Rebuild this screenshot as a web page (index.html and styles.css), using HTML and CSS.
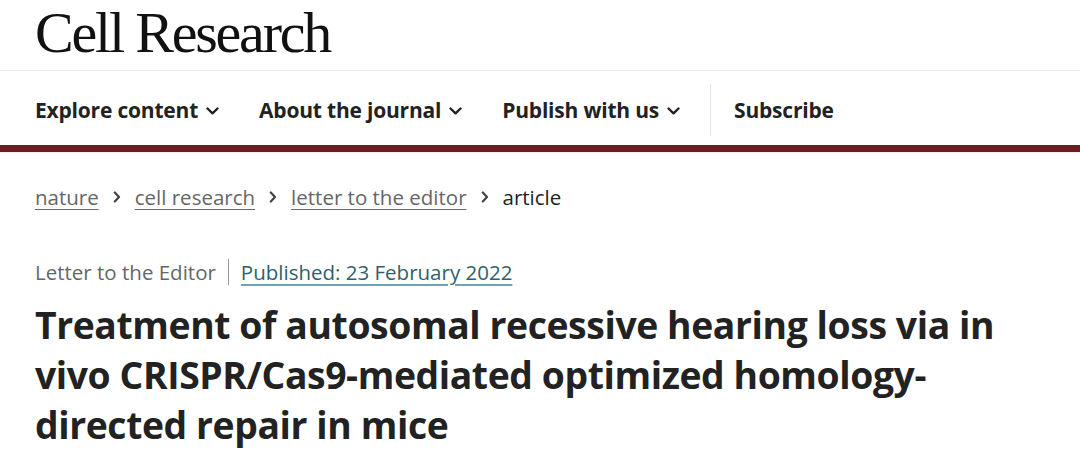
FILE: index.html
```html
<!DOCTYPE html>
<html lang="en">
<head>
<meta charset="utf-8">
<title>Cell Research</title>
<link rel="stylesheet" href="styles.css">
</head>
<body>
<header class="masthead">
  <div class="logo">Cell Research</div>
</header>
<nav class="nav">
  <a class="nav-item">Explore content
    <svg class="chev" viewBox="0 0 13 8" width="13" height="8"><path d="M1.5 1.5 L6.5 6.3 L11.5 1.5" fill="none" stroke="#222" stroke-width="2.4" stroke-linecap="round" stroke-linejoin="round"/></svg>
  </a>
  <a class="nav-item">About the journal
    <svg class="chev" viewBox="0 0 13 8" width="13" height="8"><path d="M1.5 1.5 L6.5 6.3 L11.5 1.5" fill="none" stroke="#222" stroke-width="2.4" stroke-linecap="round" stroke-linejoin="round"/></svg>
  </a>
  <a class="nav-item last">Publish with us
    <svg class="chev" viewBox="0 0 13 8" width="13" height="8"><path d="M1.5 1.5 L6.5 6.3 L11.5 1.5" fill="none" stroke="#222" stroke-width="2.4" stroke-linecap="round" stroke-linejoin="round"/></svg>
  </a>
  <span class="nav-divider"></span>
  <a class="nav-item sub">Subscribe</a>
</nav>
<main class="content">
  <ol class="crumbs">
    <li><a>nature</a></li>
    <li class="sep"><svg viewBox="0 0 8 12" width="8" height="12"><path d="M1.8 1.5 L6 6 L1.8 10.5" fill="none" stroke="#444" stroke-width="2.2" stroke-linecap="round" stroke-linejoin="round"/></svg></li>
    <li><a>cell research</a></li>
    <li class="sep"><svg viewBox="0 0 8 12" width="8" height="12"><path d="M1.8 1.5 L6 6 L1.8 10.5" fill="none" stroke="#444" stroke-width="2.2" stroke-linecap="round" stroke-linejoin="round"/></svg></li>
    <li><a>letter to the editor</a></li>
    <li class="sep"><svg viewBox="0 0 8 12" width="8" height="12"><path d="M1.8 1.5 L6 6 L1.8 10.5" fill="none" stroke="#444" stroke-width="2.2" stroke-linecap="round" stroke-linejoin="round"/></svg></li>
    <li class="current">article</li>
  </ol>
  <div class="meta">
    <span class="type">Letter to the Editor</span>
    <span class="meta-sep"></span>
    <a class="published">Published: 23 February 2022</a>
  </div>
  <h1 class="title">Treatment of autosomal recessive hearing loss via in vivo CRISPR/Cas9-mediated optimized homology-directed repair in mice</h1>
</main>
</body>
</html>
```

FILE: styles.css
```css
html, body {
  margin: 0;
  padding: 0;
  background: #fff;
}
body {
  font-family: "Open Sans", "Noto Sans", sans-serif;
  color: #222;
}
.masthead {
  height: 71px;
  border-bottom: 1px solid #ececec;
  padding-left: 35px;
  box-sizing: border-box;
}
.logo {
  font-family: "Liberation Serif", serif;
  font-size: 58px;
  line-height: 60px;
  padding-top: 3px;
  letter-spacing: -2.2px;
  color: #111;
}
.nav {
  height: 81px;
  box-sizing: border-box;
  display: flex;
  align-items: center;
  padding: 4px 0 0 35px;
  border-bottom: 7px solid #6b1e21;
}
.nav-item {
  display: flex;
  align-items: center;
  gap: 8px;
  font-size: 21px;
  font-weight: 700;
  color: #222;
  margin-right: 40px;
  letter-spacing: -0.2px;
}
.nav-item.last {
  margin-right: 30px;
}
.chev {
  margin-top: 2px;
}
.nav-divider {
  width: 1px;
  height: 52px;
  background: #e6e6e6;
  margin-right: 23px;
}
.content {
  padding-left: 35px;
  border-top: 1px solid #f7eaea;
}
.crumbs {
  list-style: none;
  margin: 29px 0 0;
  padding: 0;
  display: flex;
  align-items: center;
  font-size: 20.5px;
  line-height: 30px;
  color: #666;
}
.crumbs a {
  color: #666;
  text-decoration: underline;
  text-decoration-thickness: 1px;
  text-underline-offset: 4px;
}
.crumbs .sep {
  display: flex;
  align-items: center;
  margin: 0 14px;
}
.crumbs .current {
  color: #222;
}
.meta {
  display: flex;
  align-items: center;
  margin-top: 46px;
  font-size: 20.5px;
  line-height: 28px;
  color: #666;
}
.meta-sep {
  width: 1px;
  height: 26px;
  background: #999;
  margin: 0 12px;
}
.published {
  color: #2f5f6c;
  text-decoration: underline;
  text-decoration-color: #6aa6b3;
  text-underline-offset: 4px;
}
.title {
  margin: 14px 0 0;
  font-size: 37.3px;
  line-height: 50px;
  font-weight: 700;
  color: #222;
  width: 990px;
  letter-spacing: -0.4px;
}
```
